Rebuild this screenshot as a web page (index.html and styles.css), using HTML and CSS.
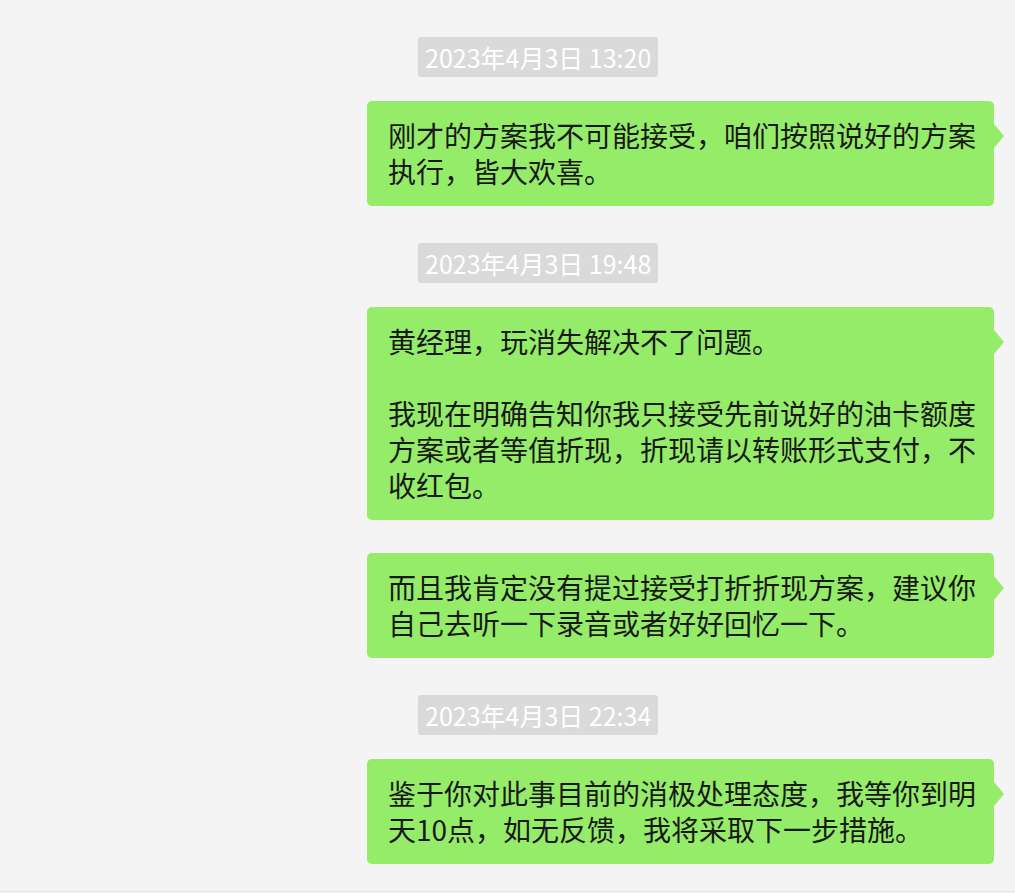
FILE: index.html
```html
<!DOCTYPE html>
<html lang="zh-CN">
<head>
<meta charset="utf-8">
<link rel="stylesheet" href="styles.css">
</head>
<body>
<div class="chat">
  <div class="time">2023年4月3日 13:20</div>
  <div class="bubble">刚才的方案我不可能接受，咱们按照说好的方案执行，皆大欢喜。</div>
  <div class="time">2023年4月3日 19:48</div>
  <div class="bubble">黄经理，玩消失解决不了问题。<br><br>我现在明确告知你我只接受先前说好的油卡额度方案或者等值折现，折现请以转账形式支付，不收红包。</div>
  <div class="bubble">而且我肯定没有提过接受打折折现方案，建议你自己去听一下录音或者好好回忆一下。</div>
  <div class="time">2023年4月3日 22:34</div>
  <div class="bubble">鉴于你对此事目前的消极处理态度，我等你到明天10点，如无反馈，我将采取下一步措施。</div>
</div>
</body>
</html>
```
FILE: styles.css
```css
html, body {
  margin: 0;
  padding: 0;
  background: #f4f4f4;
}
.chat {
  height: 892px;
  box-sizing: border-box;
  border-bottom: 1px solid #e4e4e4;
  padding-top: 37px;
  display: flex;
  flex-direction: column;
  align-items: flex-start;
  font-family: "Noto Sans CJK SC", "Noto Sans", sans-serif;
}
.time {
  margin-left: 418px;
  height: 40px;
  box-sizing: border-box;
  padding: 0 7px;
  background: #dadada;
  color: #ffffff;
  border-radius: 3px;
  font-size: 25px;
  line-height: 40px;
  white-space: nowrap;
}
.bubble + .time {
  margin-top: 37px;
}
.time + .bubble {
  margin-top: 24px;
}
.bubble + .bubble {
  margin-top: 33px;
}
.bubble {
  position: relative;
  margin-left: 367px;
  width: 627px;
  box-sizing: border-box;
  padding: 16px 14px 17px 21px;
  background: #95ec69;
  border-radius: 5px;
  color: #191919;
  font-size: 28px;
  line-height: 36px;
}
.bubble::after {
  content: "";
  position: absolute;
  right: -10px;
  top: 23px;
  border-top: 12.5px solid transparent;
  border-bottom: 12.5px solid transparent;
  border-left: 10px solid #95ec69;
}
```
